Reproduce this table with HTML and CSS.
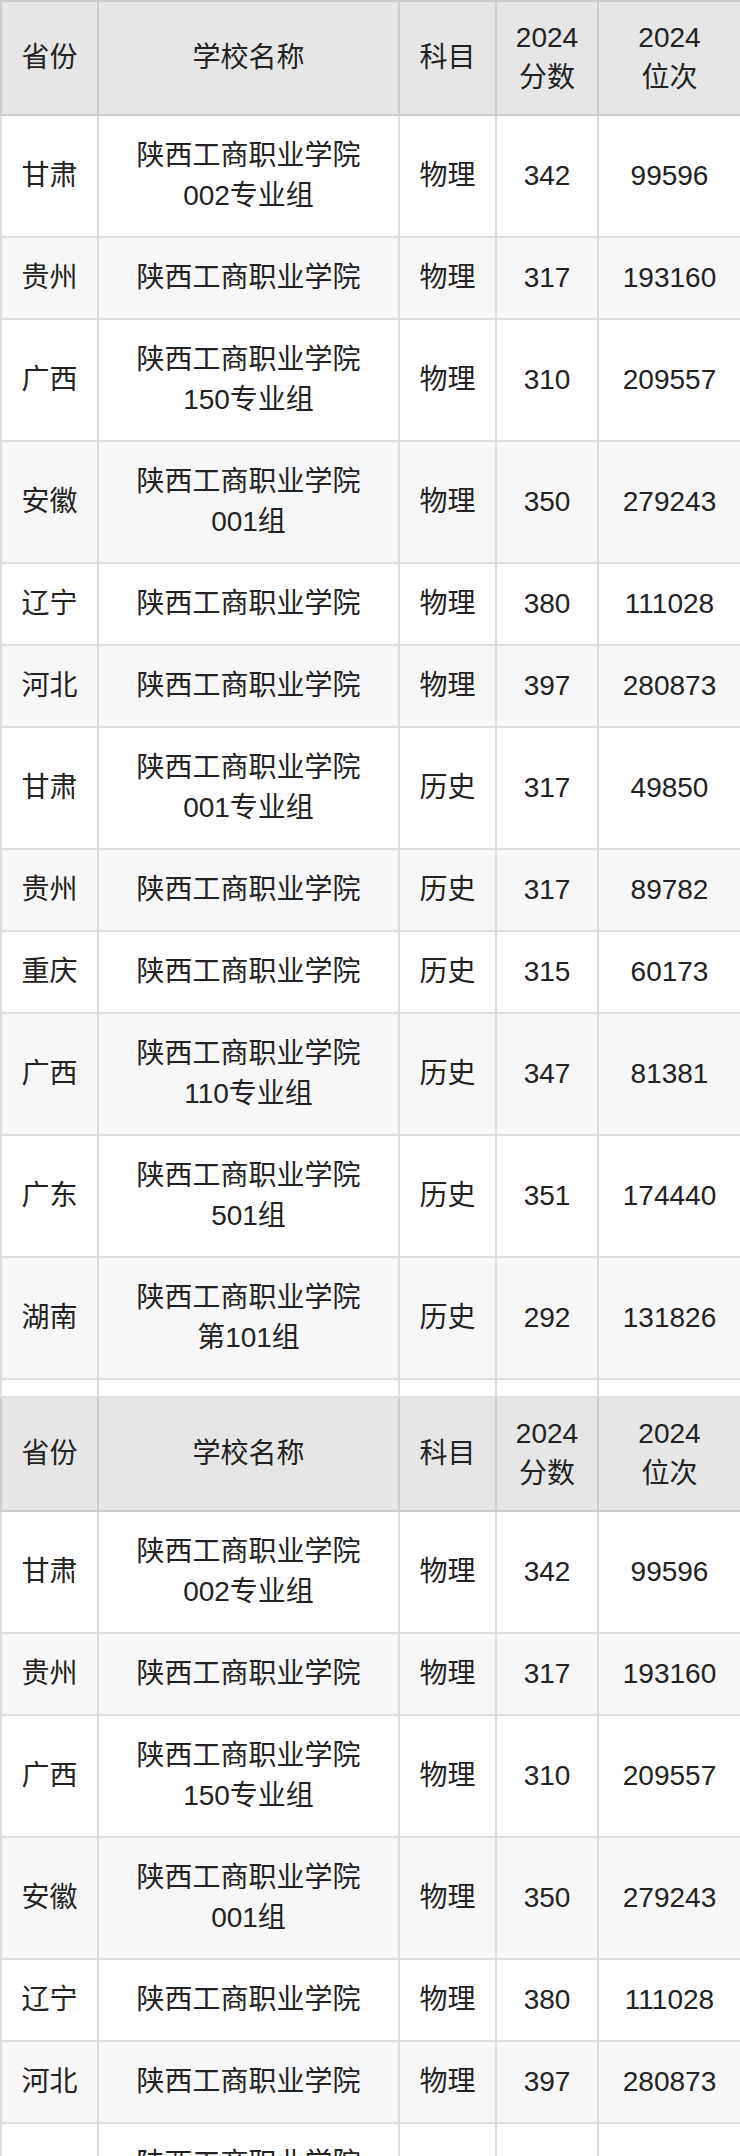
FILE: index.html
```html
<!DOCTYPE html>
<html lang="zh-CN">
<head>
<meta charset="utf-8">
<title>陕西工商职业学院 录取分数</title>
<link rel="stylesheet" href="styles.css">
</head>
<body>
<div class="page">
<table class="score-table">
  <colgroup>
    <col class="c-prov">
    <col class="c-school">
    <col class="c-subj">
    <col class="c-score">
    <col class="c-rank">
  </colgroup>
  <thead>
    <tr class="head-row">
      <th>省份</th><th>学校名称</th><th>科目</th><th>2024<br>分数</th><th>2024<br>位次</th>
    </tr>
  </thead>
  <tbody>
    <tr><td>甘肃</td><td>陕西工商职业学院<br>002专业组</td><td>物理</td><td>342</td><td>99596</td></tr>
    <tr><td>贵州</td><td>陕西工商职业学院</td><td>物理</td><td>317</td><td>193160</td></tr>
    <tr><td>广西</td><td>陕西工商职业学院<br>150专业组</td><td>物理</td><td>310</td><td>209557</td></tr>
    <tr><td>安徽</td><td>陕西工商职业学院<br>001组</td><td>物理</td><td>350</td><td>279243</td></tr>
    <tr><td>辽宁</td><td>陕西工商职业学院</td><td>物理</td><td>380</td><td>111028</td></tr>
    <tr><td>河北</td><td>陕西工商职业学院</td><td>物理</td><td>397</td><td>280873</td></tr>
    <tr><td>甘肃</td><td>陕西工商职业学院<br>001专业组</td><td>历史</td><td>317</td><td>49850</td></tr>
    <tr><td>贵州</td><td>陕西工商职业学院</td><td>历史</td><td>317</td><td>89782</td></tr>
    <tr><td>重庆</td><td>陕西工商职业学院</td><td>历史</td><td>315</td><td>60173</td></tr>
    <tr><td>广西</td><td>陕西工商职业学院<br>110专业组</td><td>历史</td><td>347</td><td>81381</td></tr>
    <tr><td>广东</td><td>陕西工商职业学院<br>501组</td><td>历史</td><td>351</td><td>174440</td></tr>
    <tr><td>湖南</td><td>陕西工商职业学院<br>第101组</td><td>历史</td><td>292</td><td>131826</td></tr>
    <tr class="spacer-row"><td></td><td></td><td></td><td></td><td></td></tr>
    <tr class="head-row">
      <th>省份</th><th>学校名称</th><th>科目</th><th>2024<br>分数</th><th>2024<br>位次</th>
    </tr>
    <tr><td>甘肃</td><td>陕西工商职业学院<br>002专业组</td><td>物理</td><td>342</td><td>99596</td></tr>
    <tr><td>贵州</td><td>陕西工商职业学院</td><td>物理</td><td>317</td><td>193160</td></tr>
    <tr><td>广西</td><td>陕西工商职业学院<br>150专业组</td><td>物理</td><td>310</td><td>209557</td></tr>
    <tr><td>安徽</td><td>陕西工商职业学院<br>001组</td><td>物理</td><td>350</td><td>279243</td></tr>
    <tr><td>辽宁</td><td>陕西工商职业学院</td><td>物理</td><td>380</td><td>111028</td></tr>
    <tr><td>河北</td><td>陕西工商职业学院</td><td>物理</td><td>397</td><td>280873</td></tr>
    <tr><td>甘肃</td><td>陕西工商职业学院<br>001专业组</td><td>历史</td><td>317</td><td>49850</td></tr>
  </tbody>
</table>
</div>
</body>
</html>
```

FILE: styles.css
```css
html, body {
  margin: 0;
  padding: 0;
  background: #ffffff;
}

.page {
  width: 740px;
  height: 2156px;
  overflow: hidden;
}

.score-table {
  width: 740px;
  table-layout: fixed;
  border-collapse: collapse;
  font-family: "Liberation Sans", "Noto Sans CJK SC", sans-serif;
  font-size: 28px;
  line-height: 40px;
  color: #222222;
  text-align: center;
}

.c-prov { width: 97px; }
.c-school { width: 301px; }
.c-subj { width: 97px; }
.c-score { width: 102px; }
.c-rank { width: 143px; }

.score-table th,
.score-table td {
  border: 2px solid #dddddd;
  padding: 20px 0;
  vertical-align: middle;
  font-weight: normal;
}

.head-row th {
  background: #e6e6e6;
  border-color: #cccccc;
  padding: 16px 0;
}

.score-table tbody tr:nth-child(even) td {
  background: #f7f7f7;
}

.score-table tr.spacer-row td {
  padding: 0;
  height: 16px;
  line-height: 0;
  background: #ffffff;
}
```
